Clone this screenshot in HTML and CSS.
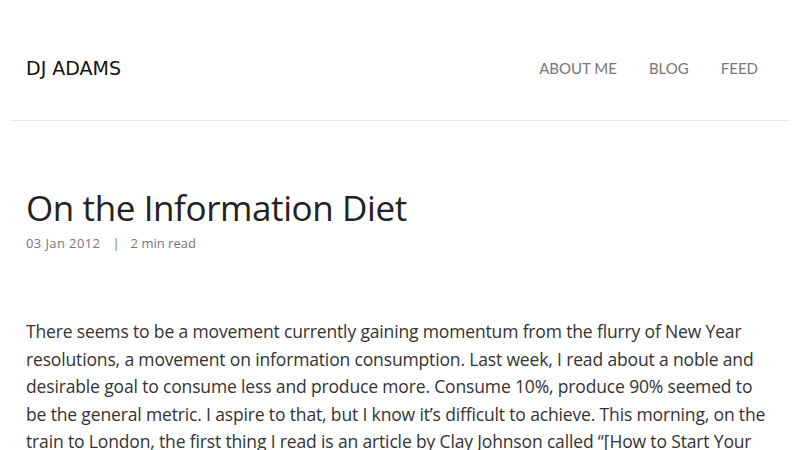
FILE: index.html
```html
<!DOCTYPE html>
<html lang="en">
<head>
<meta charset="utf-8">
<title>On the Information Diet</title>
<link rel="stylesheet" href="styles.css">
</head>
<body>
<div class="page">
  <header class="site-header">
    <a class="brand" href="#">DJ ADAMS</a>
    <nav class="nav">
      <a href="#">ABOUT ME</a>
      <a href="#">BLOG</a>
      <a href="#">FEED</a>
    </nav>
  </header>
  <article class="post">
    <h1 class="post-title">On the Information Diet</h1>
    <div class="post-meta"><span class="date">03 Jan 2012</span><span class="sep">|</span>2 min read</div>
    <p class="post-body">There seems to be a movement currently gaining momentum from the flurry of New Year resolutions, a movement on information consumption. Last week, I read about a noble and desirable goal to consume less and produce more. Consume 10%, produce 90% seemed to be the general metric. I aspire to that, but I know it’s difficult to achieve. This morning, on the train to London, the first thing I read is an article by Clay Johnson called “[How to Start Your Information Diet]” which I found thoughtful and practical.</p>
  </article>
</div>
</body>
</html>
```
FILE: styles.css
```css
html, body {
  margin: 0;
  padding: 0;
  background: #fff;
}
body {
  font-family: "Open Sans", "Noto Sans", sans-serif;
  color: #333;
}
a {
  text-decoration: none;
  color: inherit;
}
.page {
  padding: 0 10px;
}
.site-header {
  display: flex;
  align-items: center;
  justify-content: space-between;
  height: 121px;
  padding: 17px 16px 0;
  border-bottom: 1px solid #e6e6e6;
  box-sizing: border-box;
}
.brand {
  font-family: "DejaVu Sans", Verdana, sans-serif;
  font-size: 19px;
  color: #111;
  line-height: 1;
}
.nav {
  display: flex;
}
.nav a {
  font-family: Lato, "Open Sans", sans-serif;
  font-size: 15px;
  color: #777;
  padding: 0 16px;
  line-height: 1;
}
.post {
  padding: 66px 16px 0;
}
.post-title {
  font-family: "Open Sans", "Noto Sans", sans-serif;
  font-weight: 400;
  font-size: 35px;
  letter-spacing: -0.4px;
  color: #222;
  margin: 0;
  line-height: 42px;
}
.post-meta {
  font-size: 13px;
  color: #777;
  margin-top: 5px;
}
.date {
  letter-spacing: 0.4px;
}
.sep {
  margin: 0 11px 0 12px;
}
.post-body {
  font-size: 17.5px;
  letter-spacing: -0.15px;
  line-height: 27.5px;
  color: #333;
  margin: 66px 0 0;
}
```
